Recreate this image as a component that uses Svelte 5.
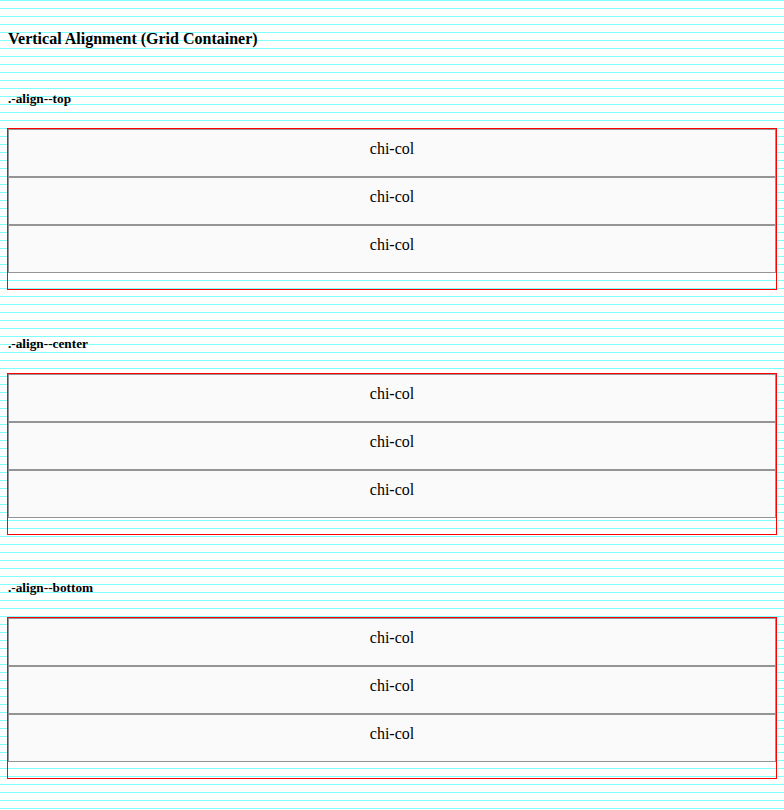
<script>
  const sections = ['top', 'center', 'bottom'];
  const columns = [1, 2, 3];
</script>

<main>
  <h4>Vertical Alignment (Grid Container)</h4>
  {#each sections as align}
    <section>
      <h5>.-align--{align}</h5>
      <div class="grid">
        {#each columns as column (column)}
          <div class="col">chi-col</div>
        {/each}
      </div>
    </section>
  {/each}
</main>

<style>
  :global(body) {
    background: linear-gradient(#80ffff 1px, #fff 1px) 0 0 / 100% 8px;
  }

  main {
    display: flex;
    flex-direction: column;
    padding: 8px;
    color: #000;
    font: 16px "Liberation Serif", "Times New Roman", serif;
  }

  h4 {
    margin: 21px 0 20px;
    line-height: 20px;
  }

  section {
    display: flex;
    flex-direction: column;
    margin-bottom: 24px;
  }

  section:last-child {
    margin-bottom: 0;
  }

  h5 {
    line-height: 16px;
  }

  .grid {
    display: flex;
    flex-direction: column;
    padding-bottom: 16px;
    outline: 1px solid #f00;
  }

  .col {
    box-sizing: border-box;
    min-height: 48px;
    padding: 8px;
    border: 1px solid #949494;
    background: #fafafa;
    line-height: 22px;
    text-align: center;
  }
</style>
